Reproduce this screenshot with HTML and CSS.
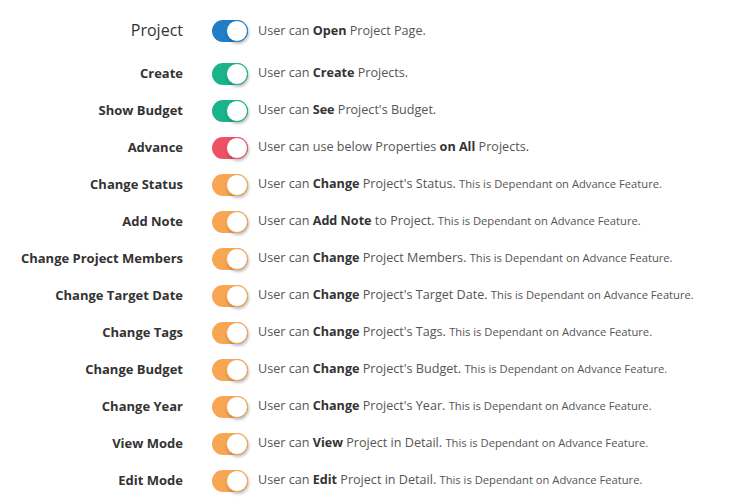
FILE: index.html
```html
<!DOCTYPE html>
<html>
<head>
<meta charset="utf-8">
<link rel="stylesheet" href="styles.css">
</head>
<body>
<div class="list">
  <div class="row row-main">
    <div class="label label-main">Project</div>
    <span class="toggle blue"><span class="knob"></span></span>
    <div class="desc">User can <b>Open</b> Project Page.</div>
  </div>
  <div class="row">
    <div class="label">Create</div>
    <span class="toggle green"><span class="knob"></span></span>
    <div class="desc">User can <b>Create</b> Projects.</div>
  </div>
  <div class="row">
    <div class="label">Show Budget</div>
    <span class="toggle green"><span class="knob"></span></span>
    <div class="desc">User can <b>See</b> Project's Budget.</div>
  </div>
  <div class="row">
    <div class="label">Advance</div>
    <span class="toggle red"><span class="knob"></span></span>
    <div class="desc">User can use below Properties <b>on All</b> Projects.</div>
  </div>
  <div class="row">
    <div class="label">Change Status</div>
    <span class="toggle orange"><span class="knob"></span></span>
    <div class="desc">User can <b>Change</b> Project's Status. <small>This is Dependant on Advance Feature.</small></div>
  </div>
  <div class="row">
    <div class="label">Add Note</div>
    <span class="toggle orange"><span class="knob"></span></span>
    <div class="desc">User can <b>Add Note</b> to Project. <small>This is Dependant on Advance Feature.</small></div>
  </div>
  <div class="row">
    <div class="label">Change Project Members</div>
    <span class="toggle orange"><span class="knob"></span></span>
    <div class="desc">User can <b>Change</b> Project Members. <small>This is Dependant on Advance Feature.</small></div>
  </div>
  <div class="row">
    <div class="label">Change Target Date</div>
    <span class="toggle orange"><span class="knob"></span></span>
    <div class="desc">User can <b>Change</b> Project's Target Date. <small>This is Dependant on Advance Feature.</small></div>
  </div>
  <div class="row">
    <div class="label">Change Tags</div>
    <span class="toggle orange"><span class="knob"></span></span>
    <div class="desc">User can <b>Change</b> Project's Tags. <small>This is Dependant on Advance Feature.</small></div>
  </div>
  <div class="row">
    <div class="label">Change Budget</div>
    <span class="toggle orange"><span class="knob"></span></span>
    <div class="desc">User can <b>Change</b> Project's Budget. <small>This is Dependant on Advance Feature.</small></div>
  </div>
  <div class="row">
    <div class="label">Change Year</div>
    <span class="toggle orange"><span class="knob"></span></span>
    <div class="desc">User can <b>Change</b> Project's Year. <small>This is Dependant on Advance Feature.</small></div>
  </div>
  <div class="row">
    <div class="label">View Mode</div>
    <span class="toggle orange"><span class="knob"></span></span>
    <div class="desc">User can <b>View</b> Project in Detail. <small>This is Dependant on Advance Feature.</small></div>
  </div>
  <div class="row">
    <div class="label">Edit Mode</div>
    <span class="toggle orange"><span class="knob"></span></span>
    <div class="desc">User can <b>Edit</b> Project in Detail. <small>This is Dependant on Advance Feature.</small></div>
  </div>
</div>
</body>
</html>
```
FILE: styles.css
```css
html, body {
  margin: 0;
  padding: 0;
  background: #fff;
}
body {
  font-family: "Open Sans", "Liberation Sans", sans-serif;
  color: #555;
  padding-top: 7px;
}
.list {
  display: flex;
  flex-direction: column;
}
.row {
  display: flex;
  align-items: center;
  height: 37px;
}
.row-main {
  height: 48px;
}
.label {
  width: 183px;
  flex: none;
  text-align: right;
  font-size: 13px;
  font-weight: 700;
  color: #333;
  margin-right: 29px;
  padding-bottom: 2px;
}
.label-main {
  font-size: 16px;
  font-weight: 400;
  color: #333;
}
.toggle {
  position: relative;
  flex: none;
  width: 36px;
  height: 22px;
  border-radius: 11px;
  box-sizing: border-box;
}
.knob {
  position: absolute;
  right: 0;
  top: 0;
  width: 22px;
  height: 22px;
  border-radius: 50%;
  background: #fff;
  box-sizing: border-box;
  border: 1px solid;
  box-shadow: 1px 2px 3px rgba(0,0,0,0.25);
}
.blue { background: #1f7ec7; }
.blue .knob { border-color: #1f7ec7; }
.green { background: #1bb38b; }
.green .knob { border-color: #1bb38b; }
.red { background: #eb5264; }
.red .knob { border-color: #eb5264; }
.orange { background: #f7a653; }
.orange .knob { border-color: #f7a653; }
.desc {
  margin-left: 10px;
  font-size: 12.6px;
  color: #555;
  white-space: nowrap;
  padding-bottom: 2px;
}
.desc b {
  color: #333;
  font-weight: 700;
}
.desc small {
  font-size: 11.2px;
  color: #555;
}
```
